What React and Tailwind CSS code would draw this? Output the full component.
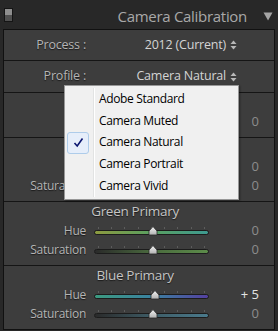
import React from "react";

const font = { fontFamily: '"Open Sans", "Noto Sans", sans-serif' };

function UpDown() {
  return (
    <svg width="7" height="10" viewBox="0 0 7 10" className="ml-[4px] inline-block">
      <path d="M0.5 4 L3.5 0.5 L6.5 4 Z" fill="#b8b8b8" />
      <path d="M0.5 6 L3.5 9.5 L6.5 6 Z" fill="#b8b8b8" />
    </svg>
  );
}

function Slider({ label, value, grad, pos = 51, bright }) {
  const ticks = [0, 12.5, 25, 37.5, 50, 62.5, 75, 87.5, 100];
  return (
    <div className="flex h-[19px] items-center">
      <div className="w-[82px] shrink-0 text-right text-[12px] tracking-[-0.25px] text-[#b4b4b4] [text-shadow:0_1px_1px_#1a1a1a]">
        {label}
      </div>
      <div className="relative ml-[8px] h-[19px] w-[115px] shrink-0">
        {ticks.map((t) => (
          <div
            key={t}
            className="absolute top-[6px] h-[2px] w-[1px] bg-[#5c5c5c]"
            style={{ left: `calc(${t}% * 0.92 + 4px)` }}
          />
        ))}
        <div
          className="absolute left-0 right-0 top-[9px] h-[5px] rounded-full border border-[#1c1c1c]"
          style={{ background: grad }}
        />
        <svg
          width="10"
          height="10"
          viewBox="0 0 10 10"
          className="absolute top-[5px]"
          style={{ left: `calc(${pos}% - 5px)` }}
        >
          <defs>
            <linearGradient id="th" x1="0" y1="0" x2="0" y2="1">
              <stop offset="0" stopColor="#f4f4f4" />
              <stop offset="1" stopColor="#b0b0b0" />
            </linearGradient>
          </defs>
          <path d="M5 0.5 L9 5 L9 9 L1 9 L1 5 Z" fill="url(#th)" stroke="#2a2a2a" strokeWidth="0.8" />
        </svg>
      </div>
      <div
        className={`ml-auto mr-[15px] text-right text-[13px] ${bright ? "text-[#e4e4e4]" : "text-[#8c8c8c]"}`}
      >
        {value}
      </div>
    </div>
  );
}

function Section({ title, children, last }) {
  return (
    <div className={`flex flex-col pb-[6px] ${last ? "" : "border-b border-[#151515]"}`}>
      <div className="flex h-[19px] items-center justify-center pr-[8px] text-[13.5px] tracking-[-0.3px] text-[#c4c4c4] [text-shadow:0_1px_1px_#1a1a1a]">
        {title}
      </div>
      {children}
    </div>
  );
}

export default function App() {
  return (
    <div className="relative h-[331px] w-[278px] overflow-hidden bg-[#282828]" style={font}>
      {/* Header */}
      <div className="flex h-[29px] items-center">
        <div className="ml-[4px] flex h-[14px] w-[9px] flex-col border border-[#151515]">
          <div className="h-1/2 bg-[#8e8e8e]" />
          <div className="h-1/2 bg-[#505050]" />
        </div>
        <div className="ml-auto pt-[3px] text-[15px] tracking-[-0.3px] text-[#a8a8a8]">Camera Calibration</div>
        <svg width="10" height="9" viewBox="0 0 10 9" className="ml-[16px] mr-[5px] mt-[3px] shrink-0">
          <path d="M0.5 0.5 L9.5 0.5 L5 8.5 Z" fill="#a4a4a4" />
        </svg>
      </div>

      {/* Panel */}
      <div className="mx-[3px] flex flex-col border border-[#111] bg-[#3d3d3d]">
        <div className="flex h-[31px] items-center border-b border-[#151515]">
          <div className="w-[82px] text-right text-[12.5px] tracking-[-0.2px] text-[#b4b4b4] [text-shadow:0_1px_1px_#1a1a1a]">
            Process :
          </div>
          <div className="ml-auto mr-[37px] flex items-center text-[12.5px] tracking-[-0.2px] text-[#d4d4d4]">
            2012 (Current)
            <UpDown />
          </div>
        </div>
        <div className="flex h-[32px] items-center border-b border-[#151515]">
          <div className="w-[82px] text-right text-[12.5px] tracking-[-0.2px] text-[#b4b4b4] [text-shadow:0_1px_1px_#1a1a1a]">
            Profile :
          </div>
          <div className="ml-auto mr-[37px] flex items-center text-[12.5px] tracking-[-0.2px] text-[#d4d4d4]">
            Camera Natural
            <UpDown />
          </div>
        </div>

        <Section title="Shadows">
          <Slider label="Tint" value="0" grad="linear-gradient(90deg,#3f8f3f,#8f3f8f)" />
        </Section>
        <Section title="Red Primary">
          <Slider label="Hue" value="0" grad="linear-gradient(90deg,#a0404a,#a08040)" />
          <Slider label="Saturation" value="0" grad="linear-gradient(90deg,#2c2c2c,#9a4444)" />
        </Section>
        <Section title="Green Primary">
          <Slider label="Hue" value="0" grad="linear-gradient(90deg,#8c9a40,#5aa060 50%,#3e9a90)" />
          <Slider label="Saturation" value="0" grad="linear-gradient(90deg,#2a2a2a,#4a6a3e 50%,#5c8c4a)" />
        </Section>
        <Section title="Blue Primary" last>
          <Slider
            label="Hue"
            value="+ 5"
            bright
            pos={53}
            grad="linear-gradient(90deg,#3c9a80,#3a82a0 50%,#5440a0)"
          />
          <Slider label="Saturation" value="0" grad="linear-gradient(90deg,#2a2a2a,#3e5c66 50%,#4a7a8c)" />
        </Section>
      </div>

      {/* Dropdown menu */}
      <div className="absolute left-[64px] top-[85px] flex h-[115px] w-[175px] flex-col border border-[#979797] bg-[#f0f0f0] py-[2px] shadow-[1px_1px_2px_rgba(0,0,0,0.4)]">
        <div className="absolute bottom-[2px] left-[28px] top-[2px] w-[1px] bg-[#e2e3e3]" />
        <div className="absolute bottom-[2px] left-[29px] top-[2px] w-[1px] bg-[#ffffff]" />
        {["Adobe Standard", "Camera Muted", "Camera Natural", "Camera Portrait", "Camera Vivid"].map(
          (t) => (
            <div key={t} className="relative flex h-[22px] items-center">
              {t === "Camera Natural" && (
                <div className="absolute left-[2px] top-0 flex h-[22px] w-[22px] items-center justify-center rounded-[3px] border border-[#aeccea] bg-[#e6eefa]">
                  <svg width="11" height="11" viewBox="0 0 11 11">
                    <path d="M1.5 6 L4.2 9 L9.5 1.5" fill="none" stroke="#0c1670" strokeWidth="1.6" />
                  </svg>
                </div>
              )}
              <div className="ml-[34px] text-[12px] tracking-[-0.35px] text-black">{t}</div>
            </div>
          )
        )}
      </div>
    </div>
  );
}
